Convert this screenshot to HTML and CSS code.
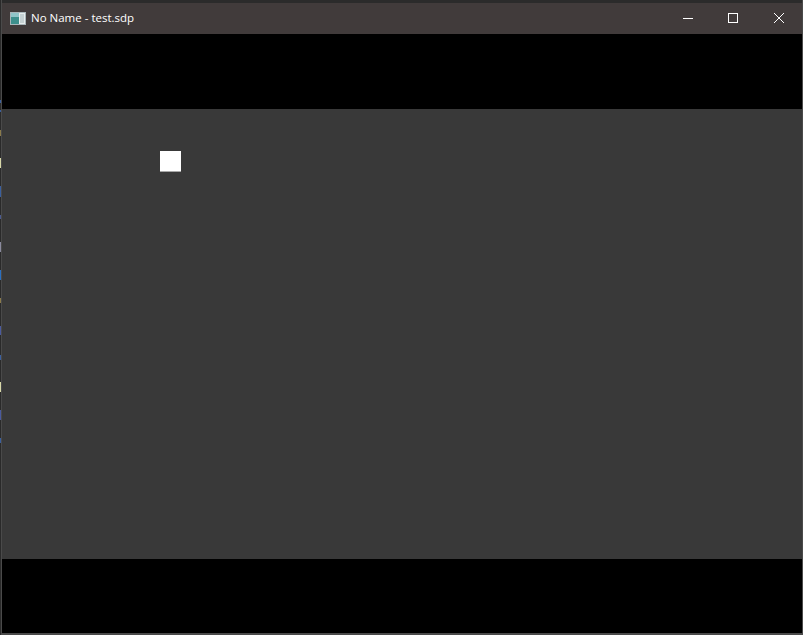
FILE: index.html
```html
<!DOCTYPE html>
<html lang="en">
<head>
<meta charset="utf-8">
<title>No Name - test.sdp</title>
<link rel="stylesheet" href="styles.css">
</head>
<body>
<div class="desktop">
  <div class="desktop-edge"></div>
  <div class="window">
    <header class="titlebar">
      <div class="title-left">
        <svg class="app-icon" width="16" height="13" viewBox="0 0 16 13">
          <rect x="0.5" y="0.5" width="15" height="12" fill="#e6ecec" stroke="#a9b6ba"/>
          <rect x="1" y="1" width="8" height="11" fill="#3d8f8c"/>
          <rect x="1" y="1" width="8" height="4" fill="#8fc4c8"/>
          <rect x="10" y="2" width="4" height="9" fill="#c4d0d2"/>
        </svg>
        <span class="title-text">No Name - test.sdp</span>
      </div>
      <div class="controls">
        <button class="ctl"><svg width="12" height="12" viewBox="0 0 12 12"><path d="M2 6.5h10" stroke="#fff" fill="none"/></svg></button>
        <button class="ctl"><svg width="12" height="12" viewBox="0 0 12 12"><rect x="1.5" y="1.5" width="9" height="9" stroke="#fff" fill="none"/></svg></button>
        <button class="ctl"><svg width="12" height="12" viewBox="0 0 12 12"><path d="M1 1l10 10M11 1L1 11" stroke="#fff" fill="none"/></svg></button>
      </div>
    </header>
    <div class="band band-top"></div>
    <main class="viewport"><div class="marker"></div></main>
    <div class="band band-bottom"></div>
  </div>
</div>
</body>
</html>
```

FILE: styles.css
```css
html, body { margin: 0; height: 100%; background: #2a2a2a; overflow: hidden; }
.desktop { display: flex; width: 803px; height: 635px; }
.desktop-edge {
  width: 1px; flex: none;
  background: linear-gradient(to bottom,
    #2a2a2a 0 100px, #3a5f9e 100px 103px, #2a2a2a 103px 110px, #3a5f9e 110px 112px,
    #2a2a2a 112px 130px, #8a7a4a 130px 136px, #2a2a2a 136px 158px, #d8d8a8 158px 168px,
    #2a2a2a 168px 186px, #3a5f9e 186px 197px, #2a2a2a 197px 215px, #4a5a8e 215px 219px,
    #2a2a2a 219px 242px, #8a8a9e 242px 252px, #2a2a2a 252px 270px, #2a6fc0 270px 280px,
    #2a2a2a 280px 298px, #8a7a4a 298px 303px, #2a2a2a 303px 326px, #4a5a9e 326px 335px,
    #2a2a2a 335px 355px, #3a5f9e 355px 360px, #2a2a2a 360px 382px, #d8d8a8 382px 392px,
    #2a2a2a 392px 410px, #4a5a9e 410px 420px, #2a2a2a 420px 438px, #3a5f9e 438px 443px,
    #2a2a2a 443px);
}
.window {
  box-sizing: border-box;
  width: 802px; height: 635px;
  display: flex; flex-direction: column;
  border: 1px solid #4a4a4a;
  border-top: 0;
  border-bottom-width: 2px;
}
.titlebar {
  height: 34px; flex: none;
  box-sizing: border-box;
  border-top: 3px solid #2b2b2b;
  background: #413b3b;
  display: flex; align-items: flex-start; justify-content: space-between;
  font: 11.5px/16px "Open Sans", "Noto Sans", sans-serif;
  color: #fff;
}
.title-left { display: flex; align-items: center; gap: 5px; padding: 7px 0 0 8px; }
.app-icon { display: block; }
.controls { display: flex; }
.ctl {
  width: 46px; height: 30px;
  padding: 0; border: 0; background: none;
  display: flex; align-items: center; justify-content: center;
}
.band { background: #000; }
.band-top { height: 75px; flex: none; }
.band-bottom { flex: 1; }
.viewport { height: 450px; flex: none; box-sizing: border-box; background: #393939; padding: 42px 0 0 158px; }
.marker { width: 21px; height: 20px; background: #fff; border-bottom: 1px solid #a8a8a8; }
```
